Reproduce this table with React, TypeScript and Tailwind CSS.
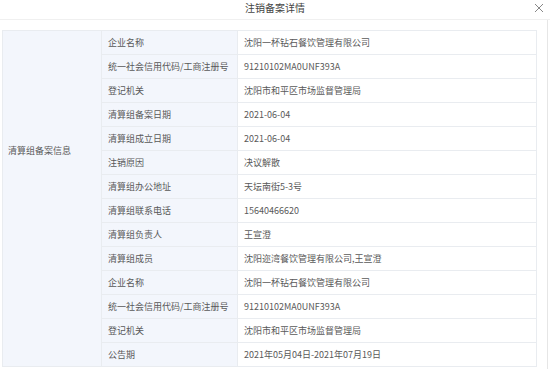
const rowsA: [string, string][] = [
  ["企业名称", "沈阳一杯钻石餐饮管理有限公司"],
  ["统一社会信用代码/工商注册号", "91210102MA0UNF393A"],
  ["登记机关", "沈阳市和平区市场监督管理局"],
  ["清算组备案日期", "2021-06-04"],
  ["清算组成立日期", "2021-06-04"],
  ["注销原因", "决议解散"],
  ["清算组办公地址", "天坛南街5-3号"],
  ["清算组联系电话", "15640466620"],
  ["清算组负责人", "王宣澄"],
  ["清算组成员", "沈阳迩湾餐饮管理有限公司,王宣澄"],
];

const rowsB: [string, string][] = [
  ["企业名称", "沈阳一杯钻石餐饮管理有限公司"],
  ["统一社会信用代码/工商注册号", "91210102MA0UNF393A"],
  ["登记机关", "沈阳市和平区市场监督管理局"],
  ["公告期", "2021年05月04日-2021年07月19日"],
];

const cell = "h-[24px] border border-[#e9ecf0] px-[6px] align-middle";

function Group({ title, rows, edge }: { title: string; rows: [string, string][]; edge: string }) {
  return (
    <>
      {rows.map(([label, value], i) => (
        <tr key={label + i}>
          {i === 0 && (
            <td rowSpan={rows.length} className={`${cell} ${edge} w-[99px] bg-[#f3f6fc] pl-[5px]`}>
              {title}
            </td>
          )}
          <td className={`${cell} w-[136px] bg-[#f3f6fc]`}>{label}</td>
          <td className={`${cell} bg-white`}>{value}</td>
        </tr>
      ))}
    </>
  );
}

export default function App() {
  return (
    <div
      className="h-[369px] w-[550px] overflow-hidden bg-white text-[#595959]"
      style={{ fontFamily: '"Noto Sans CJK SC", "Noto Sans", sans-serif' }}
    >
      <div className="relative flex h-[20px] items-start justify-center border-b border-[#f0f0f0] pt-[1px]">
        <span className="text-[10px] leading-[14px] text-[#444]">注销备案详情</span>
        <svg
          className="absolute right-[6px] top-[3px]"
          width="10"
          height="10"
          viewBox="0 0 10 10"
          stroke="#888"
          strokeWidth="1"
        >
          <path d="M1 1 9 9M9 1 1 9" />
        </svg>
      </div>
      <div className="h-[349px] w-[548px] border-r border-[#e6e6e6] pt-[10px] pl-[2px]">
        <table className="w-[535px] table-fixed border-collapse text-[9px] leading-none">
          <colgroup>
            <col className="w-[99px]" />
            <col className="w-[136px]" />
            <col />
          </colgroup>
          <tbody>
            <Group title="清算组备案信息" rows={rowsA} edge="border-b-0" />
            <Group title="" rows={rowsB} edge="border-t-0" />
          </tbody>
        </table>
      </div>
    </div>
  );
}
